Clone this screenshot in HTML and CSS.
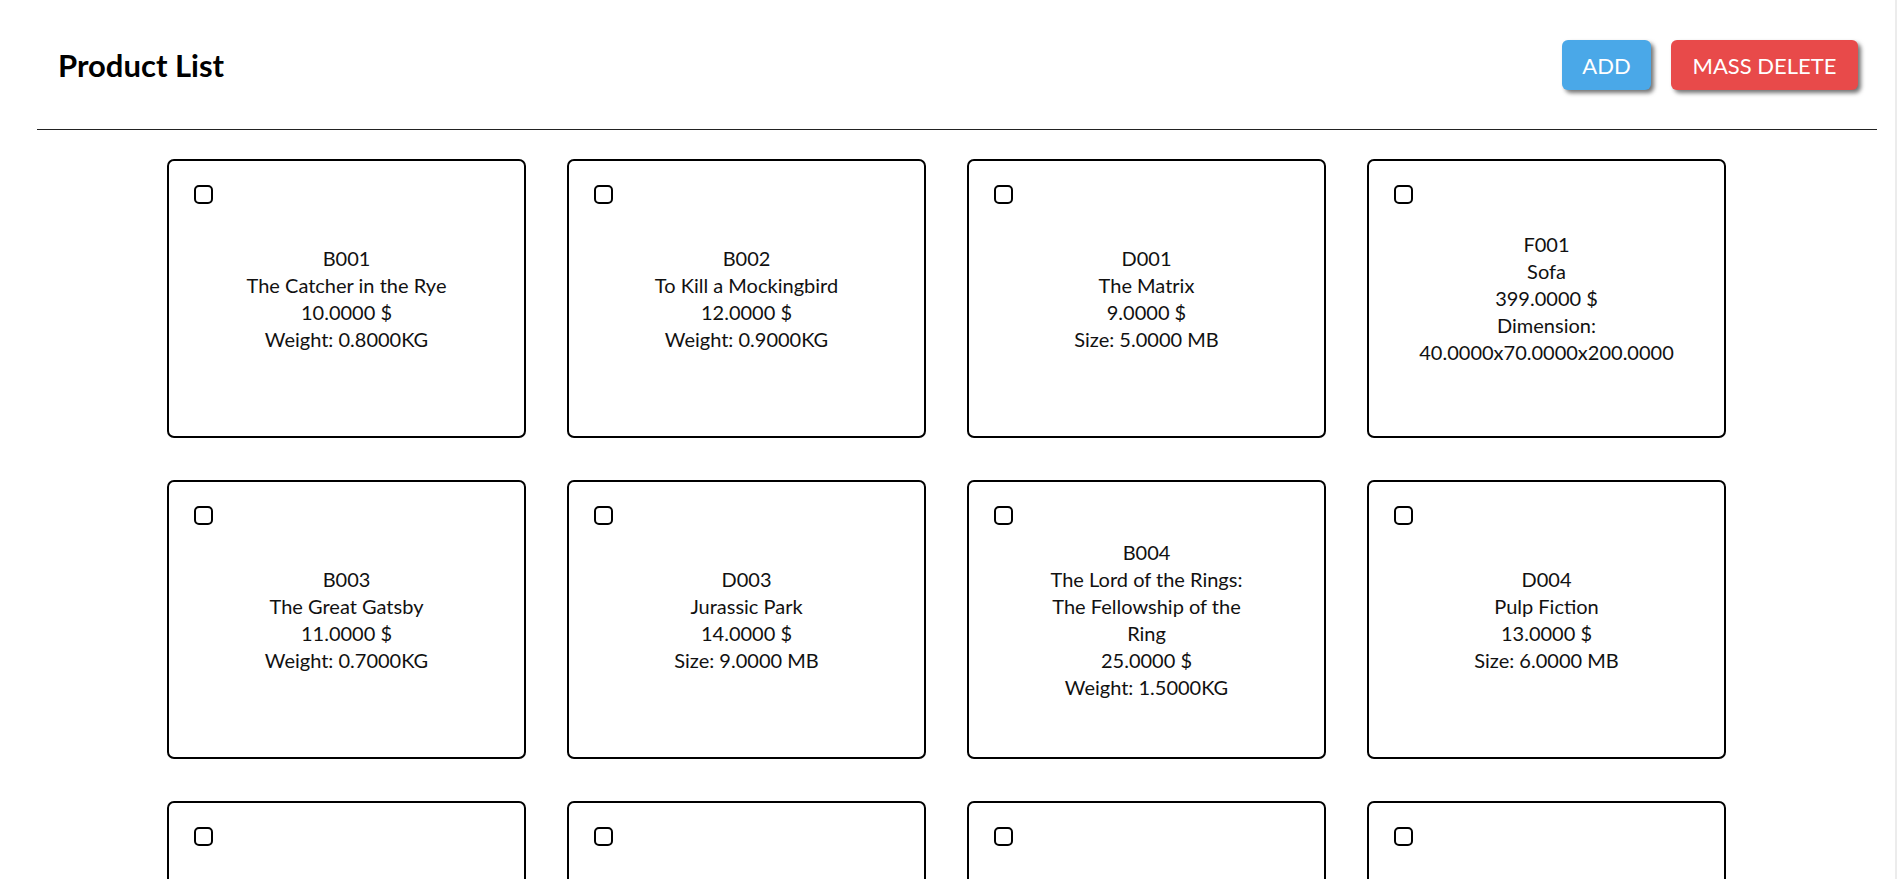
FILE: index.html
```html
<!DOCTYPE html>
<html lang="en">
<head>
<meta charset="utf-8">
<title>Product List</title>
<link rel="stylesheet" href="styles.css">
</head>
<body>
<div class="page">
  <header class="header">
    <h1 class="title">Product List</h1>
    <div class="actions">
      <button class="btn btn-add" type="button">ADD</button>
      <button class="btn btn-delete" type="button">MASS DELETE</button>
    </div>
  </header>
  <main class="grid">
    <div class="card"><input class="check" type="checkbox"><div class="info"><div>B001</div><div>The Catcher in the Rye</div><div>10.0000 $</div><div>Weight: 0.8000KG</div></div></div>
    <div class="card"><input class="check" type="checkbox"><div class="info"><div>B002</div><div>To Kill a Mockingbird</div><div>12.0000 $</div><div>Weight: 0.9000KG</div></div></div>
    <div class="card"><input class="check" type="checkbox"><div class="info"><div>D001</div><div>The Matrix</div><div>9.0000 $</div><div>Size: 5.0000 MB</div></div></div>
    <div class="card"><input class="check" type="checkbox"><div class="info"><div>F001</div><div>Sofa</div><div>399.0000 $</div><div>Dimension: 40.0000x70.0000x200.0000</div></div></div>
    <div class="card"><input class="check" type="checkbox"><div class="info"><div>B003</div><div>The Great Gatsby</div><div>11.0000 $</div><div>Weight: 0.7000KG</div></div></div>
    <div class="card"><input class="check" type="checkbox"><div class="info"><div>D003</div><div>Jurassic Park</div><div>14.0000 $</div><div>Size: 9.0000 MB</div></div></div>
    <div class="card"><input class="check" type="checkbox"><div class="info"><div>B004</div><div>The Lord of the Rings: The Fellowship of the Ring</div><div>25.0000 $</div><div>Weight: 1.5000KG</div></div></div>
    <div class="card"><input class="check" type="checkbox"><div class="info"><div>D004</div><div>Pulp Fiction</div><div>13.0000 $</div><div>Size: 6.0000 MB</div></div></div>
    <div class="card"><input class="check" type="checkbox"><div class="info"><div>F002</div><div>Table</div><div>150.0000 $</div><div>Dimension: 100.0000x60.0000x75.0000</div></div></div>
    <div class="card"><input class="check" type="checkbox"><div class="info"><div>D002</div><div>Inception</div><div>15.0000 $</div><div>Size: 7.0000 MB</div></div></div>
    <div class="card"><input class="check" type="checkbox"><div class="info"><div>B005</div><div>1984</div><div>9.0000 $</div><div>Weight: 0.6000KG</div></div></div>
    <div class="card"><input class="check" type="checkbox"><div class="info"><div>F004</div><div>Chair</div><div>79.0000 $</div><div>Dimension: 45.0000x50.0000x90.0000</div></div></div>
  </main>
</div>
</body>
</html>
```
FILE: styles.css
```css
html {
  border-right: 2px solid #ececec;
}
body {
  margin: 0;
  background: #fff;
  color: #111;
  font-family: "Lato", "Noto Sans", sans-serif;
}
.page {
  padding: 0 18px 40px 37px;
}
.header {
  height: 129px;
  display: flex;
  align-items: center;
  justify-content: space-between;
  border-bottom: 1px solid #222;
  padding: 0 19px 0 21px;
}
.title {
  margin: 0;
  font-size: 31px;
  font-weight: 700;
  color: #000;
}
.actions {
  display: flex;
  gap: 20px;
  padding-top: 1px;
}
.btn {
  height: 50px;
  border: none;
  border-radius: 6px;
  color: #fff;
  font-family: inherit;
  font-size: 22px;
  padding: 0;
  box-shadow: 3px 3px 4px rgba(0, 0, 0, 0.55);
  cursor: pointer;
}
.btn-add {
  width: 89px;
  background: #4aa8e8;
}
.btn-delete {
  width: 187px;
  background: #e84a4a;
}
.grid {
  display: grid;
  grid-template-columns: repeat(4, 359px);
  gap: 42px 41px;
  margin: 29px 0 0 130px;
}
.card {
  position: relative;
  box-sizing: border-box;
  height: 279px;
  border: 2px solid #000;
  border-radius: 7px;
  display: flex;
  align-items: center;
  justify-content: center;
}
.check {
  position: absolute;
  top: 24px;
  left: 25px;
  margin: 0;
  width: 19px;
  height: 19px;
  appearance: none;
  -webkit-appearance: none;
  border: 2px solid #000;
  border-radius: 5px;
  background: #fff;
}
.info {
  width: 225px;
  display: flex;
  flex-direction: column;
  align-items: center;
  text-align: center;
  font-size: 20px;
  line-height: 27px;
}
```
